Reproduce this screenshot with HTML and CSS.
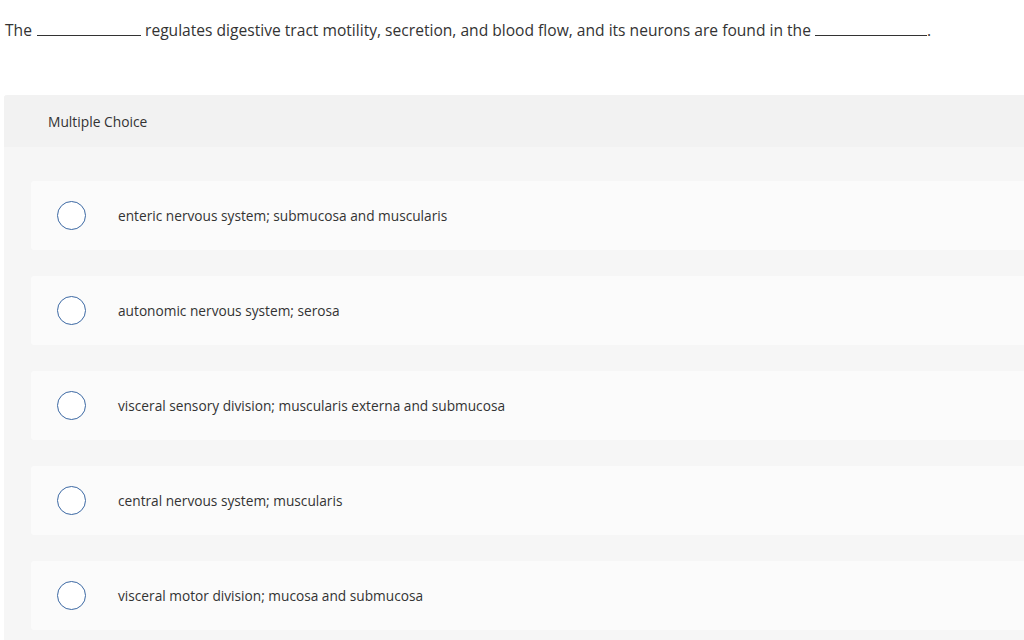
FILE: index.html
```html
<!DOCTYPE html>
<html lang="en">
<head>
<meta charset="utf-8">
<title>Multiple Choice</title>
<link rel="stylesheet" href="styles.css">
</head>
<body>
<p class="question">The <span class="blank blank-1"></span> regulates digestive tract motility, secretion, and blood flow, and its neurons are found in the <span class="blank blank-2"></span>.</p>
<section class="panel">
  <header class="panel-header">Multiple Choice</header>
  <ul class="options">
    <li class="option"><span class="radio"></span><span class="label">enteric nervous system; submucosa and muscularis</span></li>
    <li class="option"><span class="radio"></span><span class="label">autonomic nervous system; serosa</span></li>
    <li class="option"><span class="radio"></span><span class="label">visceral sensory division; muscularis externa and submucosa</span></li>
    <li class="option"><span class="radio"></span><span class="label">central nervous system; muscularis</span></li>
    <li class="option"><span class="radio"></span><span class="label">visceral motor division; mucosa and submucosa</span></li>
  </ul>
</section>
</body>
</html>
```
FILE: styles.css
```css
html, body {
  margin: 0;
  padding: 0;
  background: #ffffff;
  overflow: hidden;
}
body {
  width: 1024px;
  height: 640px;
  font-family: "Open Sans", "Liberation Sans", Arial, sans-serif;
  color: #333333;
}
.question {
  margin: 0;
  padding: 20px 5px 0;
  height: 95px;
  box-sizing: border-box;
  font-size: 15.6px;
  line-height: 20px;
  white-space: nowrap;
}
.blank {
  display: inline-block;
  border-bottom: 1px solid #333333;
  vertical-align: baseline;
  height: 1px;
}
.blank-1 { width: 104px; margin-left: 1px; }
.blank-2 { width: 112px; }
.panel {
  margin-left: 4px;
  background: #f6f6f6;
  border-radius: 3px 0 0 0;
  height: 545px;
}
.panel-header {
  height: 52px;
  box-sizing: border-box;
  padding-left: 44px;
  display: flex;
  align-items: center;
  background: #f2f2f2;
  border-radius: 3px 0 0 0;
  font-size: 13.8px;
  color: #333333;
}
.options {
  list-style: none;
  margin: 0;
  padding: 34px 0 0 27px;
  display: flex;
  flex-direction: column;
  gap: 26px;
}
.option {
  height: 69px;
  display: flex;
  align-items: center;
  background: #fbfbfb;
  border-radius: 3px 0 0 3px;
  padding-left: 26px;
}
.radio {
  width: 27px;
  height: 27px;
  border: 1.5px solid #3b68a3;
  border-radius: 50%;
  background: #ffffff;
  flex: none;
}
.label {
  margin-left: 32px;
  font-size: 13.7px;
  color: #333333;
}
```
